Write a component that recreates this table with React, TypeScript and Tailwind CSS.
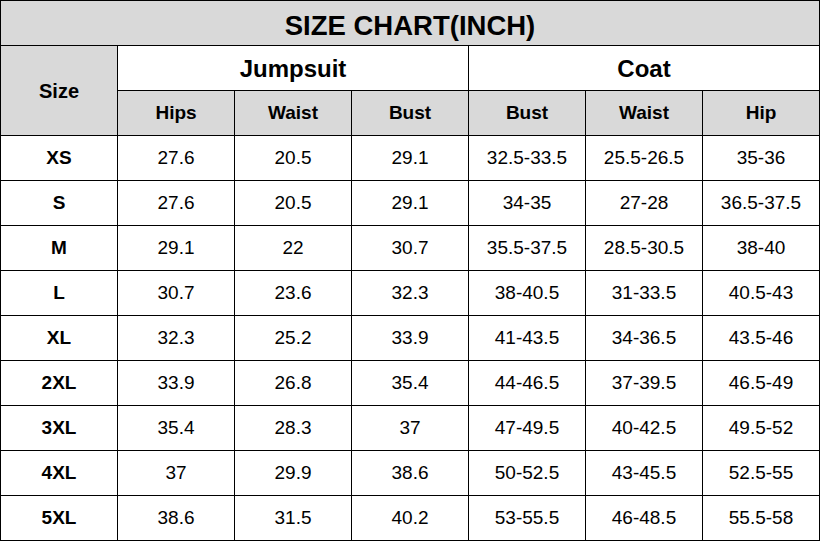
import React from "react";

const rows: string[][] = [
  ["XS", "27.6", "20.5", "29.1", "32.5-33.5", "25.5-26.5", "35-36"],
  ["S", "27.6", "20.5", "29.1", "34-35", "27-28", "36.5-37.5"],
  ["M", "29.1", "22", "30.7", "35.5-37.5", "28.5-30.5", "38-40"],
  ["L", "30.7", "23.6", "32.3", "38-40.5", "31-33.5", "40.5-43"],
  ["XL", "32.3", "25.2", "33.9", "41-43.5", "34-36.5", "43.5-46"],
  ["2XL", "33.9", "26.8", "35.4", "44-46.5", "37-39.5", "46.5-49"],
  ["3XL", "35.4", "28.3", "37", "47-49.5", "40-42.5", "49.5-52"],
  ["4XL", "37", "29.9", "38.6", "50-52.5", "43-45.5", "52.5-55"],
  ["5XL", "38.6", "31.5", "40.2", "53-55.5", "46-48.5", "55.5-58"],
];

const subHeads = ["Hips", "Waist", "Bust", "Bust", "Waist", "Hip"];

const cell = "flex items-center justify-center border-r border-b border-black";

export default function App() {
  return (
    <div
      className="bg-white text-black"
      style={{ fontFamily: '"Liberation Sans", Arial, sans-serif' }}
    >
      <div className="grid grid-cols-[repeat(7,117px)] auto-rows-[45px] w-[820px] border-l border-t border-black">
        <div className={`${cell} col-span-7 bg-[#d9d9d9] font-bold text-[27.5px] pt-[6px]`}>
          SIZE CHART(INCH)
        </div>
        <div className={`${cell} row-span-2 bg-[#d9d9d9] font-bold text-[20px] pt-[1px]`}>Size</div>
        <div className={`${cell} col-span-3 bg-white font-bold text-[24px] pt-[1px]`}>Jumpsuit</div>
        <div className={`${cell} col-span-3 bg-white font-bold text-[24px] pt-[1px]`}>Coat</div>
        {subHeads.map((h, i) => (
          <div key={i} className={`${cell} bg-[#d9d9d9] font-bold text-[19px] pt-[1px]`}>
            {h}
          </div>
        ))}
        {rows.map((r, ri) =>
          r.map((v, ci) => (
            <div
              key={`${ri}-${ci}`}
              className={`${cell} bg-white text-[19px] pt-[1px] ${ci === 0 ? "font-bold" : ""}`}
            >
              {v}
            </div>
          ))
        )}
      </div>
    </div>
  );
}
